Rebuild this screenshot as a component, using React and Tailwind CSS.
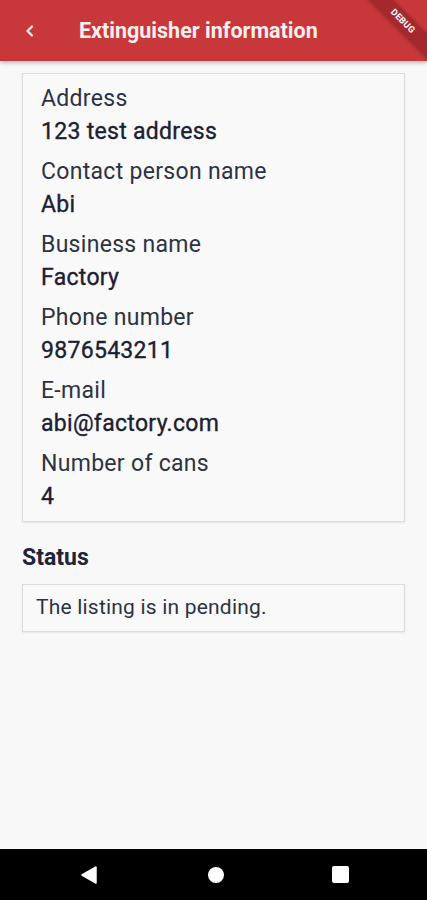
import React from "react";

const items = [
  ["Address", "123 test address"],
  ["Contact person name", "Abi"],
  ["Business name", "Factory"],
  ["Phone number", "9876543211"],
  ["E-mail", "abi@factory.com"],
  ["Number of cans", "4"],
];

export default function App() {
  return (
    <div
      className="relative w-[427px] h-[900px] bg-[#f8f8f9] flex flex-col overflow-hidden"
      style={{ fontFamily: "Roboto, 'Noto Sans', sans-serif" }}
    >
      <header className="relative h-[61px] shrink-0 bg-[#c8373a] flex items-center shadow-[0_2px_4px_rgba(0,0,0,0.25)] z-10">
        <div className="w-[62px] flex justify-center">
          <svg width="14" height="14" viewBox="0 0 14 14" className="ml-[-2px]">
            <path d="M9 2.5 L4.5 7 L9 11.5" fill="none" stroke="#fbeaea" strokeWidth="2.4" strokeLinecap="round" strokeLinejoin="round" />
          </svg>
        </div>
        <h1 className="ml-[17px] text-[21.5px] font-bold text-[#fbeeee] leading-none">
          Extinguisher information
        </h1>
        <div className="absolute top-0 right-0 w-[62px] h-[62px] overflow-hidden">
          <div className="absolute top-[13px] right-[-28px] w-[104px] h-[16px] bg-[#a5292c] rotate-45 flex items-center justify-center shadow-[0_1px_4px_rgba(0,0,0,0.35)]">
            <span className="text-[9px] font-bold text-white leading-none tracking-[0.2px]">DEBUG</span>
          </div>
        </div>
      </header>

      <main className="flex-1 px-[22px] pt-[12px]">
        <div className="border border-[#dcdcde] bg-[#f9f9fa] shadow-[0_1px_2px_rgba(0,0,0,0.08)] pl-[18px] pt-[11px] pb-[10px] flex flex-col gap-[12px]">
          {items.map(([l, v]) => (
            <div key={l} className="flex flex-col gap-[5px]">
              <div className="text-[23px] leading-[28px] tracking-[0.3px] text-[#2d3243]">{l}</div>
              <div className="text-[23px] leading-[28px] tracking-[0.3px] font-normal text-[#1b2033] [-webkit-text-stroke:0.35px_#1b2033]">{v}</div>
            </div>
          ))}
        </div>

        <h2 className="mt-[22px] text-[23px] leading-[28px] font-bold text-[#1f2437]">Status</h2>
        <div className="mt-[12px] h-[48px] border border-[#dcdcde] bg-[#f9f9fa] shadow-[0_1px_2px_rgba(0,0,0,0.08)] flex items-center pl-[13px]">
          <span className="text-[21px] tracking-[0.2px] text-[#2d3243]">The listing is in pending.</span>
        </div>
      </main>

      <nav className="h-[51px] shrink-0 bg-black flex items-center justify-between px-[78px]">
        <svg width="20" height="20" viewBox="0 0 20 20" className="ml-[1px]">
          <path d="M17 2 L17 18 L3 10 Z" fill="white" stroke="white" strokeLinejoin="round" strokeWidth="1.5" />
        </svg>
        <div className="w-[16px] h-[16px] rounded-full bg-white" />
        <div className="w-[17px] h-[17px] rounded-[2px] bg-white" />
      </nav>
    </div>
  );
}
